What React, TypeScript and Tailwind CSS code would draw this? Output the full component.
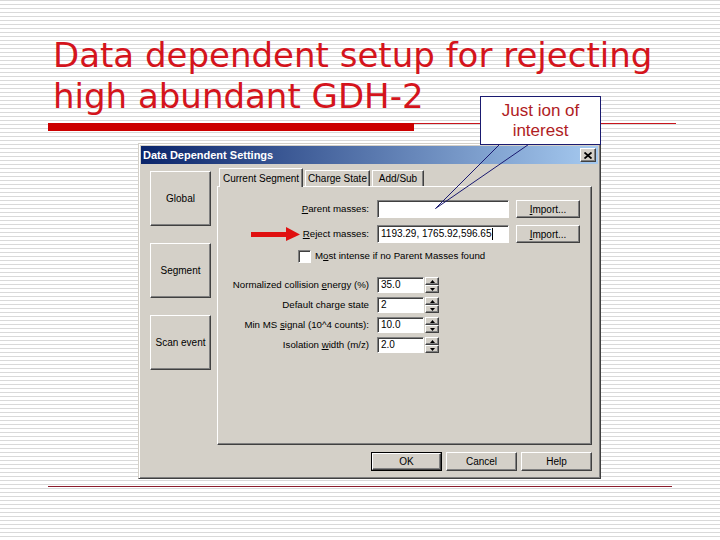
import React from "react";

const raised =
  "bg-[#d4d0c8] border border-t-white border-l-white border-r-[#404040] border-b-[#404040] shadow-[inset_-1px_-1px_0_#808080]";
const sunken =
  "bg-white border border-t-[#808080] border-l-[#808080] border-r-white border-b-white shadow-[inset_1px_1px_0_#404040]";

function SpinRow({ label, value }: { label: React.ReactNode; value: string }) {
  return (
    <div className="flex items-center h-[16px]">
      <div className="w-[151px] text-right text-[9.7px] leading-[16px] text-black whitespace-nowrap">{label}</div>
      <div className={`${sunken} ml-[8px] w-[47px] h-[16px] pl-[3px] text-[10px] leading-[14px] text-black`}>{value}</div>
      <div className="ml-[1px] flex flex-col w-[14px] h-[16px]">
        <div className={`${raised} h-[8px] flex items-center justify-center`}>
          <svg width="5" height="3" viewBox="0 0 5 3">
            <path d="M2.5 0 L5 3 L0 3 Z" fill="#000" />
          </svg>
        </div>
        <div className={`${raised} h-[8px] flex items-center justify-center`}>
          <svg width="5" height="3" viewBox="0 0 5 3">
            <path d="M0 0 L5 0 L2.5 3 Z" fill="#000" />
          </svg>
        </div>
      </div>
    </div>
  );
}

function MassRow({ label, value, caret }: { label: React.ReactNode; value: string; caret?: boolean }) {
  return (
    <div className="flex items-center h-[18px]">
      <div className="w-[151px] text-right text-[9.7px] leading-[18px] text-black whitespace-nowrap">{label}</div>
      <div className={`${sunken} ml-[8px] w-[132px] h-[18px] pl-[3px] text-[10px] leading-[16px] text-black whitespace-nowrap overflow-hidden`}>
        {value}
        {caret ? <span className="inline-block w-px h-[12px] bg-black align-middle ml-px" /> : null}
      </div>
      <div className={`${raised} ml-[7px] w-[64px] h-[18px] flex items-center justify-center text-[10px] text-black`}>
        <span>
          <u>I</u>mport...
        </span>
      </div>
    </div>
  );
}

export default function App() {
  return (
    <div className="relative w-[720px] h-[540px] overflow-hidden bg-[repeating-linear-gradient(to_bottom,#d9d9d9_0px,#d9d9d9_1px,#ffffff_1px,#ffffff_4px)] font-['Liberation_Sans',Arial,sans-serif]">
      {/* Title */}
      <div className="pt-[35px] pl-[53px] font-['DejaVu_Sans',sans-serif] text-[34px] leading-[41px] text-[#d4141c] whitespace-nowrap">
        <div>Data dependent setup for rejecting</div>
        <div>high abundant GDH-2</div>
      </div>

      {/* Rule */}
      <div className="mt-[6px] ml-[48px] flex items-start">
        <div className="w-[366px] h-[8px] bg-[#cc0000]" />
        <div className="w-[262px] h-px bg-[#c8141c]" />
      </div>

      {/* Dialog */}
      <div className="mt-[12px] ml-[138px] w-[463px] h-[336px] bg-[#d4d0c8] border border-t-[#d4d0c8] border-l-[#d4d0c8] border-r-[#404040] border-b-[#404040] shadow-[inset_1px_1px_0_#ffffff,inset_-1px_-1px_0_#808080] p-[2px] flex flex-col">
        {/* Title bar */}
        <div className="h-[18px] flex items-center justify-between bg-[linear-gradient(to_right,#0a246a,#a6caf0)] pl-[2px] pr-[2px]">
          <span className="text-white font-bold text-[11px] leading-[18px] whitespace-nowrap">Data Dependent Settings</span>
          <div className={`${raised} w-[16px] h-[14px] flex items-center justify-center`}>
            <svg width="8" height="7" viewBox="0 0 8 7">
              <path d="M0.5 0.5 L7.5 6.5 M7.5 0.5 L0.5 6.5" stroke="#000" strokeWidth="1.8" />
            </svg>
          </div>
        </div>

        {/* Body */}
        <div className="flex flex-1">
          {/* Left buttons */}
          <div className="pl-[9px] pt-[7px] flex flex-col gap-[17px]">
            {["Global", "Segment", "Scan event"].map((t) => (
              <div key={t} className={`${raised} w-[61px] h-[55px] flex items-center justify-center text-[10px] text-black`}>
                {t}
              </div>
            ))}
          </div>

          {/* Right */}
          <div className="ml-[6px] pt-[4px] flex flex-col">
            {/* Tabs */}
            <div className="flex items-end h-[18px] pl-[2px] relative z-10">
              <div className="h-[19px] -mb-px w-[84px] bg-[#d4d0c8] border-t border-l border-r border-t-white border-l-white border-r-[#404040] shadow-[inset_-1px_0_0_#808080] flex items-start justify-center pt-[2px] text-[10px] text-black whitespace-nowrap">
                Current Segment
              </div>
              <div className="h-[16px] w-[65px] ml-[2px] bg-[#d4d0c8] border-t border-l border-r border-t-white border-l-white border-r-[#404040] shadow-[inset_-1px_0_0_#808080] flex items-center justify-center text-[10px] text-black whitespace-nowrap">
                Charge State
              </div>
              <div className="h-[16px] w-[52px] ml-[2px] bg-[#d4d0c8] border-t border-l border-r border-t-white border-l-white border-r-[#404040] shadow-[inset_-1px_0_0_#808080] flex items-center justify-center text-[10px] text-black whitespace-nowrap">
                Add/Sub
              </div>
            </div>

            {/* Panel */}
            <div className="w-[375px] h-[259px] border border-t-white border-l-white border-r-[#404040] border-b-[#404040] shadow-[inset_-1px_-1px_0_#808080] pt-[13px] flex flex-col">
              <MassRow
                label={
                  <>
                    <u>P</u>arent masses:
                  </>
                }
                value=""
              />
              <div className="mt-[7px]">
                <MassRow
                  label={
                    <>
                      <u>R</u>eject masses:
                    </>
                  }
                  value="1193.29, 1765.92,596.65"
                  caret
                />
              </div>
              <div className="mt-[7px] pl-[80px] flex items-center h-[13px]">
                <div className={`${sunken} w-[13px] h-[13px]`} />
                <span className="ml-[4px] text-[9.7px] text-black whitespace-nowrap">
                  M<u>o</u>st intense if no Parent Masses found
                </span>
              </div>
              <div className="mt-[14px] flex flex-col gap-[4px]">
                <SpinRow
                  label={
                    <>
                      Normalized collision <u>e</u>nergy (%)
                    </>
                  }
                  value="35.0"
                />
                <SpinRow label="Default charge state" value="2" />
                <SpinRow
                  label={
                    <>
                      Min MS <u>s</u>ignal (10^4 counts):
                    </>
                  }
                  value="10.0"
                />
                <SpinRow
                  label={
                    <>
                      Isolation <u>w</u>idth (m/z)
                    </>
                  }
                  value="2.0"
                />
              </div>
            </div>

            {/* Buttons */}
            <div className="mt-[7px] flex justify-end gap-[4px]">
              <div className="w-[71px] h-[19px] border border-black">
                <div className={`${raised} w-full h-full flex items-center justify-center text-[10px] text-black`}>OK</div>
              </div>
              <div className={`${raised} w-[71px] h-[19px] flex items-center justify-center text-[10px] text-black`}>Cancel</div>
              <div className={`${raised} w-[71px] h-[19px] flex items-center justify-center text-[10px] text-black`}>Help</div>
            </div>
          </div>
        </div>
      </div>

      {/* Bottom line */}
      <div className="mt-[7px] ml-[48px] w-[624px] h-px bg-[#8c1c2c]" />

      {/* Red arrow annotation */}
      <svg className="absolute left-[251px] top-[226px]" width="50" height="16" viewBox="0 0 50 16">
        <rect x="0" y="6" width="36" height="5" fill="#e01010" />
        <path d="M35 1 L49 8.5 L35 15 Z" fill="#e01010" />
      </svg>

      {/* Callout tail */}
      <svg className="absolute left-0 top-0 pointer-events-none" width="720" height="540" viewBox="0 0 720 540">
        <path d="M500.5 143.5 L435.5 208.5 L528.5 144.5" fill="none" stroke="#1a1a70" strokeWidth="1" />
      </svg>

      {/* Callout box */}
      <div className="absolute left-[480px] top-[96px] w-[121px] h-[49px] bg-white border border-[#1a1a70] flex flex-col items-center justify-center text-[17px] leading-[20px] text-[#b01c24]">
        <div>Just ion of</div>
        <div>interest</div>
      </div>
    </div>
  );
}
